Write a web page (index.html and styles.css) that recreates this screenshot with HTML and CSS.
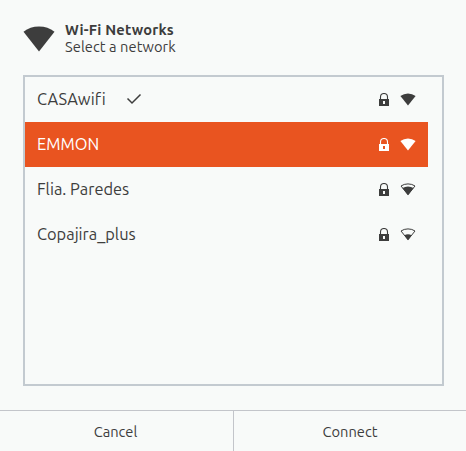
FILE: index.html
```html
<!DOCTYPE html>
<html lang="en">
<head>
<meta charset="utf-8">
<title>Wi-Fi Networks</title>
<link rel="stylesheet" href="styles.css">
</head>
<body>
<svg class="symbols" width="0" height="0">
  <symbol id="lock" viewBox="0 0 10 13">
    <path d="M1.500 6.500V4a3.500 3.500 0 0 1 7 0v2.500" fill="none" stroke="currentColor" stroke-width="1.100"/>
    <path fill-rule="evenodd" d="M0 6h10v7H0zM4 8v3h2V8z" fill="currentColor"/>
  </symbol>
  <symbol id="wifi-full" viewBox="0 0 16 13">
    <path d="M.4 3Q3.8.4 8 .4T15.6 3L8 12.4z" fill="currentColor"/>
  </symbol>
  <symbol id="wifi-good" viewBox="0 0 16 13">
    <path d="M1 3Q4 .9 8 .9T15 3L8 11.7z" fill="none" stroke="currentColor"/>
    <path d="M2.500 5Q5 3.400 8 3.400T13.500 5L8 12.200z" fill="currentColor"/>
  </symbol>
  <symbol id="wifi-ok" viewBox="0 0 16 13">
    <path d="M1 3Q4 .9 8 .9T15 3L8 11.7z" fill="none" stroke="currentColor"/>
    <path d="M4.400 7.200Q6 6.200 8 6.200t3.600 1L8 12.200z" fill="currentColor"/>
  </symbol>
</svg>
<main class="dialog">
  <header class="header">
    <svg class="header-icon" viewBox="0 0 32 26"><path d="M.5 5.800Q7 .5 16 .5t15.500 5.300L16 25.500z" fill="currentColor"/></svg>
    <div class="heading">
      <h1 class="title">Wi-Fi Networks</h1>
      <p class="subtitle">Select a network</p>
    </div>
  </header>
  <ul class="list">
    <li class="row"><span class="name connected">CASAwifi</span><svg class="check" viewBox="0 0 16 12"><path d="M1.500 5.500l4.500 4.500 8.500-8.500" fill="none" stroke="currentColor" stroke-width="1.500"/></svg><svg class="lock"><use href="#lock"/></svg><svg class="signal"><use href="#wifi-full"/></svg></li>
    <li class="row selected"><span class="name">EMMON</span><svg class="lock"><use href="#lock"/></svg><svg class="signal"><use href="#wifi-full"/></svg></li>
    <li class="row"><span class="name">Flia. Paredes</span><svg class="lock"><use href="#lock"/></svg><svg class="signal"><use href="#wifi-good"/></svg></li>
    <li class="row"><span class="name">Copajira_plus</span><svg class="lock"><use href="#lock"/></svg><svg class="signal"><use href="#wifi-ok"/></svg></li>
  </ul>
  <footer class="actions">
    <button class="button cancel">Cancel</button>
    <button class="button connect">Connect</button>
  </footer>
</main>
</body>
</html>
```
FILE: styles.css
```css
* { box-sizing: border-box; }
body { margin: 0; background: #f8faf9; color: #3d3d3d; font-family: Ubuntu, "Noto Sans", sans-serif; }
.symbols { position: absolute; }
.dialog { display: flex; flex-direction: column; width: 466px; height: 451px; overflow: hidden; }
.header { display: flex; height: 75px; padding: 21px 0 0 23px; }
.header-icon { width: 32px; height: 26px; margin: 5px 10px 0 0; }
.title, .subtitle { margin: 0; font-size: 14.67px; line-height: 17px; white-space: nowrap; }
.title { font-weight: 700; letter-spacing: 0.2px; }
.subtitle { font-weight: 400; letter-spacing: 0.06px; }
.list { width: 421px; height: 311px; margin: 0 0 0 23px; padding: 0 14px 0 0; border: 2px solid #c3cad0; list-style: none; }
.row { display: flex; align-items: center; height: 45px; padding: 0 12px; }
.selected { background: #e95420; color: #fff; }
.name { font-size: 16.4px; line-height: 22px; padding-bottom: 2px; white-space: nowrap; }
.connected { letter-spacing: 0.1px; }
.check { width: 16px; height: 12px; margin: -2px 0 0 20px; }
.lock { width: 10px; height: 13px; margin: 0 11px 0 auto; }
.signal { width: 16px; height: 13px; margin-top: -1px; }
.actions { display: flex; flex: 1; margin-top: 24px; border-top: 1px solid #c3c5ca; }
.button { flex: 1; padding: 2px 0 0; border: 0; background: none; color: inherit; font: 14.67px/20px Ubuntu, "Noto Sans", sans-serif; }
.cancel { flex: 0 0 234px; padding-right: 2px; border-right: 1px solid #c3c5ca; }
```
